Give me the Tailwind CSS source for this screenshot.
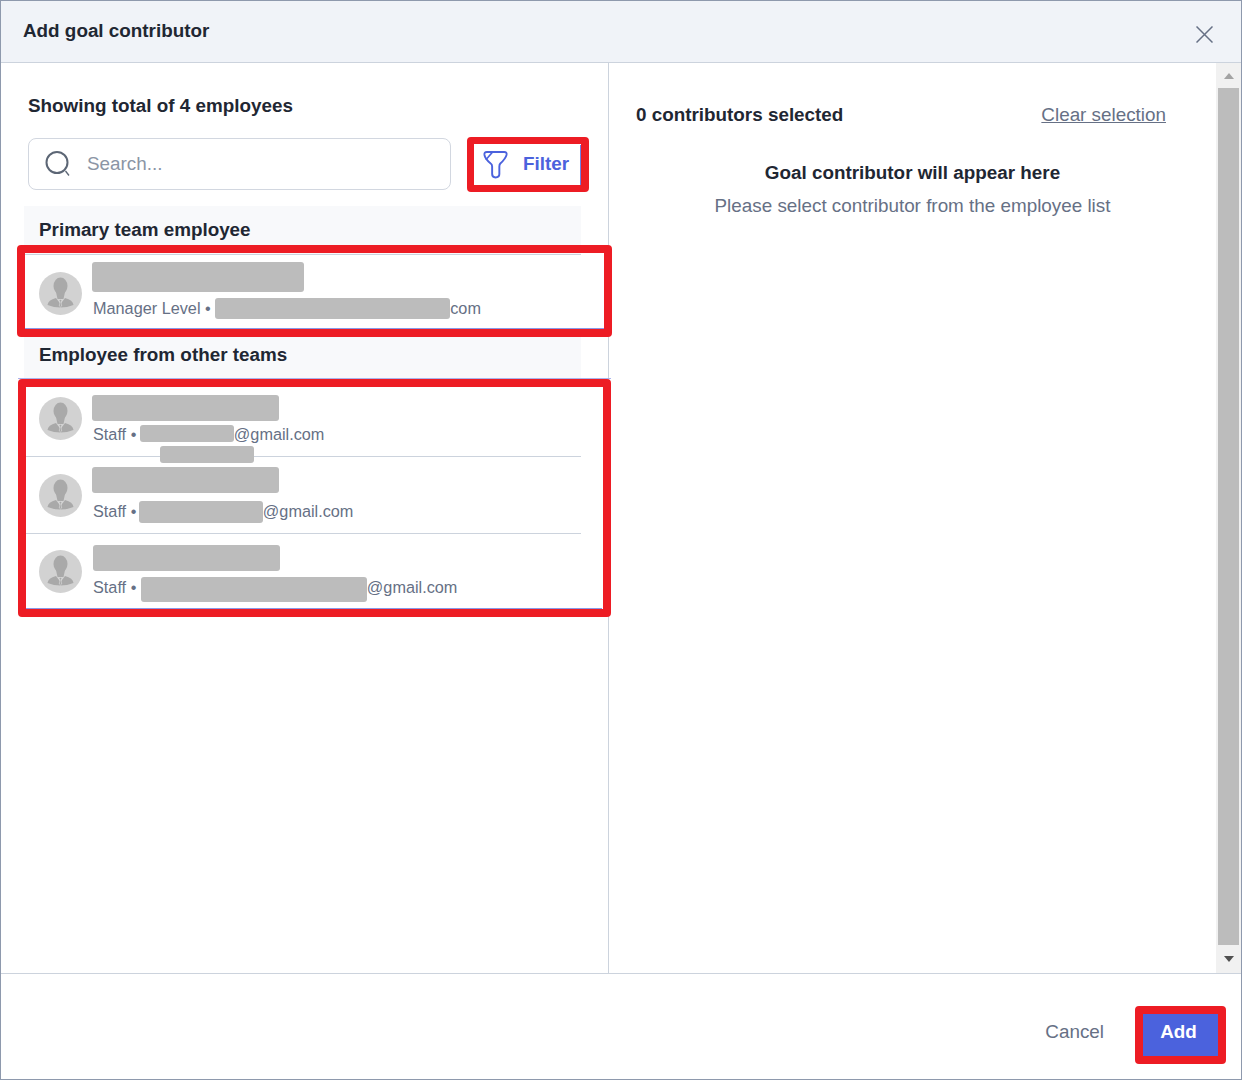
<!DOCTYPE html>
<html>
<head>
<meta charset="utf-8">
<script src="https://cdn.jsdelivr.net/npm/@tailwindcss/browser@4"></script>
</head>
<body class="bg-white">
<div class="relative w-[1242px] h-[1080px] flex flex-col border border-[#8e99ad] bg-white overflow-hidden font-['Liberation_Sans',sans-serif] text-[#1f2733]">
  <header class="h-[61px] shrink-0 bg-[#f0f3f8] flex items-start justify-between pl-[22px] pr-[28px]">
    <h1 class="mt-[18px] text-[18.85px] leading-[24px] font-bold">Add goal contributor</h1>
    <button class="mt-[25px] w-[17px] h-[17px]">
      <svg viewBox="0 0 17 17" class="w-[17px] h-[17px]" fill="none" stroke="#667085" stroke-width="1.5"><path d="M0.5 0.5 L16.5 16.5 M16.5 0.5 L0.5 16.5"/></svg>
    </button>
  </header>
  <main class="h-[911px] shrink-0 flex border-t border-[#ccd3dd]">
    <section class="w-[608px] shrink-0 border-r border-[#ccd3dd] pt-[31px] flex flex-col">
      <h2 class="ml-[27px] text-[18.85px] leading-[24px] font-bold">Showing total of 4 employees</h2>
      <div class="ml-[27px] mt-[20px] flex items-center gap-[16px] h-[52px]">
        <div class="w-[423px] h-[52px] border border-[#d2d7e0] rounded-[8px] flex items-center pl-[16px] gap-[16px]">
          <svg viewBox="0 0 26 26" class="w-[26px] h-[26px] shrink-0" fill="none" stroke="#5c6675" stroke-width="2"><circle cx="12" cy="11.5" r="10.5"/><path d="M20.5 20 L24 24.5" stroke-width="1.3"/></svg>
          <span class="text-[18.85px] text-[#8b95a5]">Search...</span>
        </div>
        <button class="w-[122px] h-[54px] flex items-center pl-[16px] gap-[15px] text-[#4b62dd] text-[18.85px] font-bold">
          <svg viewBox="0 0 26 30" class="w-[25px] h-[29px] shrink-0" fill="none" stroke="#4b62dd" stroke-width="2" stroke-linejoin="round"><path d="M4 2 H22 Q25 2 24.5 5 Q23.5 9 18 14 Q17 15 17 17 V25 Q17 28.5 13 28.5 Q9.5 28.5 9.5 25 V17 Q9.5 15 8 14 Q2 9 1.5 5 Q1.2 2 4 2 Z"/><path d="M3 10 L10 2" stroke-width="1.7"/></svg>
          Filter
        </button>
      </div>
      <div class="ml-[23px] w-[557px] mt-[16px] h-[48px] bg-[#f8f9fb] pl-[15px] pt-[11px] text-[18.85px] leading-[26px] font-bold">Primary team employee</div>
      <div class="ml-[23px] w-[557px] h-[83px] border-t border-[#ccd3dd] flex items-start pl-[15px] gap-[10px]">
        <svg viewBox="0 0 43 43" class="w-[43px] h-[43px] shrink-0 mt-[17px]"><circle cx="21.5" cy="21.5" r="21.5" fill="#d2d2d2"/><ellipse cx="21.5" cy="14" rx="7" ry="8.5" fill="#a9a9a9"/><path d="M17 20 L18.5 27 H24.5 L26 20 Z" fill="#a9a9a9"/><path d="M8.5 33 Q9 28 17 26 L21.5 32 L26 26 Q34 28 34.5 33 Q28 35.5 21.5 35.5 Q15 35.5 8.5 33 Z" fill="#a9a9a9"/><path d="M21.5 27 L20.2 28.5 L21 30 L20.3 34 L21.5 35 L22.7 34 L22 30 L22.8 28.5 Z" fill="#a9a9a9" stroke="#e4e4e4" stroke-width=".5"/></svg>
        <div class="flex flex-col mt-[7px]">
          <span class="block w-[212px] h-[30px] rounded-[3px] bg-[#bcbcbc]"></span>
          <p class="mt-[6px] ml-px h-[21px] flex items-start text-[16.25px] leading-[20px] text-[#667085]">Manager Level •&nbsp;<span class="inline-block w-[235px] h-[21px] rounded-[3px] bg-[#bcbcbc]"></span>com</p>
        </div>
      </div>
      <div class="ml-[23px] w-[557px] h-[42px] bg-[#f8f9fb] pl-[15px] pt-[5px] text-[18.85px] leading-[26px] font-bold">Employee from other teams</div>
      <div class="ml-[23px] w-[557px] flex flex-col">
        <div class="h-[78px] border-b border-[#ccd3dd] flex items-start pl-[15px] gap-[10px]">
          <svg viewBox="0 0 43 43" class="w-[43px] h-[43px] shrink-0 mt-[18px]"><circle cx="21.5" cy="21.5" r="21.5" fill="#d2d2d2"/><ellipse cx="21.5" cy="14" rx="7" ry="8.5" fill="#a9a9a9"/><path d="M17 20 L18.5 27 H24.5 L26 20 Z" fill="#a9a9a9"/><path d="M8.5 33 Q9 28 17 26 L21.5 32 L26 26 Q34 28 34.5 33 Q28 35.5 21.5 35.5 Q15 35.5 8.5 33 Z" fill="#a9a9a9"/><path d="M21.5 27 L20.2 28.5 L21 30 L20.3 34 L21.5 35 L22.7 34 L22 30 L22.8 28.5 Z" fill="#a9a9a9" stroke="#e4e4e4" stroke-width=".5"/></svg>
          <div class="flex flex-col mt-[16px]">
            <span class="block w-[187px] h-[26px] rounded-[3px] bg-[#bcbcbc]"></span>
            <p class="mt-[4px] ml-px h-[17px] flex items-start text-[16.25px] leading-[18px] text-[#667085]">Staff •&nbsp;<span class="inline-block -ml-px w-[94px] h-[17px] rounded-[3px] bg-[#bcbcbc]"></span>@gmail.com</p>
          </div>
        </div>
        <div class="h-[77px] border-b border-[#ccd3dd] flex items-start pl-[15px] gap-[10px]">
          <svg viewBox="0 0 43 43" class="w-[43px] h-[43px] shrink-0 mt-[17px]"><circle cx="21.5" cy="21.5" r="21.5" fill="#d2d2d2"/><ellipse cx="21.5" cy="14" rx="7" ry="8.5" fill="#a9a9a9"/><path d="M17 20 L18.5 27 H24.5 L26 20 Z" fill="#a9a9a9"/><path d="M8.5 33 Q9 28 17 26 L21.5 32 L26 26 Q34 28 34.5 33 Q28 35.5 21.5 35.5 Q15 35.5 8.5 33 Z" fill="#a9a9a9"/><path d="M21.5 27 L20.2 28.5 L21 30 L20.3 34 L21.5 35 L22.7 34 L22 30 L22.8 28.5 Z" fill="#a9a9a9" stroke="#e4e4e4" stroke-width=".5"/></svg>
          <div class="flex flex-col mt-[10px]">
            <span class="block w-[187px] h-[26px] rounded-[3px] bg-[#bcbcbc]"></span>
            <p class="mt-[8px] ml-px h-[22px] flex items-start text-[16.25px] leading-[20px] text-[#667085]">Staff •&nbsp;<span class="inline-block -ml-[2px] w-[124px] h-[22px] rounded-[3px] bg-[#bcbcbc]"></span>@gmail.com</p>
          </div>
        </div>
        <div class="h-[76px] flex items-start pl-[15px] gap-[10px]">
          <svg viewBox="0 0 43 43" class="w-[43px] h-[43px] shrink-0 mt-[16px]"><circle cx="21.5" cy="21.5" r="21.5" fill="#d2d2d2"/><ellipse cx="21.5" cy="14" rx="7" ry="8.5" fill="#a9a9a9"/><path d="M17 20 L18.5 27 H24.5 L26 20 Z" fill="#a9a9a9"/><path d="M8.5 33 Q9 28 17 26 L21.5 32 L26 26 Q34 28 34.5 33 Q28 35.5 21.5 35.5 Q15 35.5 8.5 33 Z" fill="#a9a9a9"/><path d="M21.5 27 L20.2 28.5 L21 30 L20.3 34 L21.5 35 L22.7 34 L22 30 L22.8 28.5 Z" fill="#a9a9a9" stroke="#e4e4e4" stroke-width=".5"/></svg>
          <div class="flex flex-col mt-[11px] ml-px">
            <span class="block w-[187px] h-[26px] rounded-[3px] bg-[#bcbcbc]"></span>
            <p class="mt-[6px] h-[25px] flex items-start text-[16.25px] leading-[20px] text-[#667085]">Staff •&nbsp;<span class="inline-block w-[226px] h-[25px] rounded-[3px] bg-[#bcbcbc]"></span>@gmail.com</p>
          </div>
        </div>
      </div>
    </section>
    <section class="flex-1 flex min-w-0">
      <div class="flex-1 pl-[27px] pr-[50px] pt-[40px]">
        <div class="flex justify-between items-center h-[24px]">
          <span class="text-[18.85px] font-bold">0 contributors selected</span>
          <a class="text-[18.85px] text-[#667085] underline">Clear selection</a>
        </div>
        <p class="mt-[34px] ml-[-27px] mr-[-50px] text-center text-[18.85px] leading-[24px] font-bold">Goal contributor will appear here</p>
        <p class="mt-[9px] ml-[-27px] mr-[-50px] text-center text-[18.85px] leading-[24px] text-[#667085]">Please select contributor from the employee list</p>
      </div>
      <div class="w-[25px] shrink-0 bg-[#f1f1f1] flex flex-col items-center">
        <div class="h-[25px] flex items-center justify-center"><div class="w-0 h-0 border-x-[5.5px] border-x-transparent border-b-[6px] border-b-[#a3a3a3]"></div></div>
        <div class="w-[21px] h-[857px] bg-[#bcbcbc]"></div>
        <div class="flex-1 flex items-center justify-center"><div class="w-0 h-0 border-x-[5.5px] border-x-transparent border-t-[6px] border-t-[#505050]"></div></div>
      </div>
    </section>
  </main>
  <footer class="flex-1 border-t border-[#ccd3dd] flex items-center justify-end pr-[23px] pt-[16px] gap-[39px]">
    <button class="text-[18.85px] text-[#667085] pb-[4px]">Cancel</button>
    <button class="w-[75px] h-[42px] bg-[#4b62dd] text-white text-[18.85px] font-bold pb-[4px] pr-[4px]">Add</button>
  </footer>

  <!-- Annotation and redaction overlays -->
  <span class="absolute left-[159px] top-[445px] w-[94px] h-[17px] rounded-[3px] bg-[#bcbcbc]"></span>
  <span class="absolute left-[579px] top-[144px] w-px h-[41px] bg-[#6f80e4]"></span>
  <span class="absolute left-[24px] top-[327px] w-[579px] h-px bg-[#8a97e6]"></span>
  <span class="absolute left-[24px] top-[607px] w-[577px] h-px bg-[#8a97e6]"></span>
  <span class="absolute left-[17px] top-[377px] w-[593px] h-px bg-[#aab2ec]"></span>
  <div class="absolute left-[466px] top-[136px] w-[122px] h-[55px] border-[7px] border-r-[8px] border-[#ed1c24] rounded-[4px]"></div>
  <div class="absolute left-[16px] top-[244px] w-[595px] h-[92px] border-[8px] border-[#ed1c24] rounded-[4px]"></div>
  <div class="absolute left-[17px] top-[378px] w-[593px] h-[238px] border-[8px] border-[#ed1c24] rounded-[4px]"></div>
  <div class="absolute left-[1134px] top-[1005px] w-[91px] h-[58px] border-[8px] border-[#ed1c24] rounded-[4px]"></div>
</div>
</body>
</html>
